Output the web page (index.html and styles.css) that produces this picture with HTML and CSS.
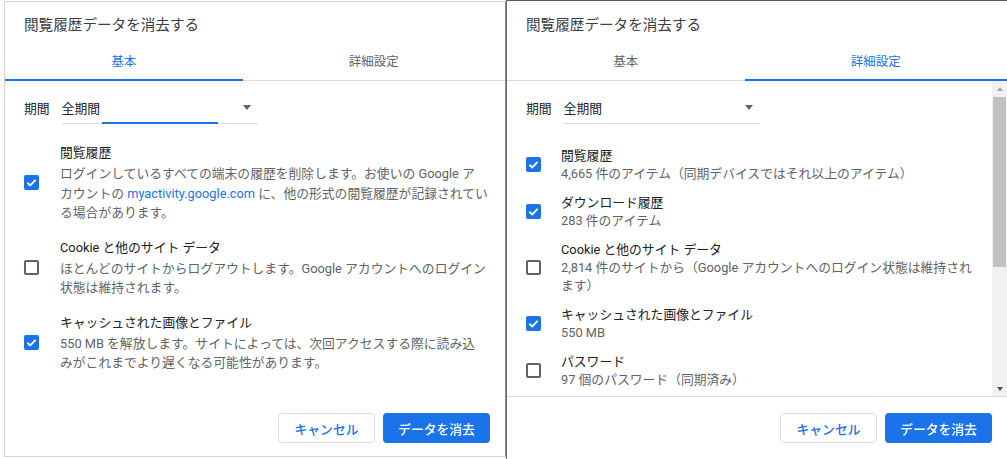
FILE: index.html
```html
<!DOCTYPE html>
<html lang="ja">
<head>
<meta charset="utf-8">
<title>閲覧履歴データを消去する</title>
<link rel="stylesheet" href="styles.css">
</head>
<body>
<div class="screen">
  <section class="dialog dialog-left">
    <h1 class="title">閲覧履歴データを消去する</h1>
    <div class="tabs">
      <div class="tab active">基本</div>
      <div class="tab">詳細設定</div>
    </div>
    <div class="body">
      <div class="content">
        <div class="period">
          <span class="period-label">期間</span>
          <div class="select focused"><span>全期間</span><span class="arrow"></span></div>
        </div>
        <div class="items items-basic">
          <div class="item">
            <span class="cb checked"><svg viewBox="0 0 16 16"><path d="M3.6 8.3 L6.6 11.1 L12.4 5.2"/></svg></span>
            <div class="text">
              <div class="label">閲覧履歴</div>
              <div class="desc">ログインしているすべての端末の履歴を削除します。お使いの Google ア<br>カウントの <span class="link">myactivity.google.com</span> に、他の形式の閲覧履歴が記録されてい<br>る場合があります。</div>
            </div>
          </div>
          <div class="item">
            <span class="cb"></span>
            <div class="text">
              <div class="label">Cookie と他のサイト データ</div>
              <div class="desc">ほとんどのサイトからログアウトします。Google アカウントへのログイン<br>状態は維持されます。</div>
            </div>
          </div>
          <div class="item">
            <span class="cb checked"><svg viewBox="0 0 16 16"><path d="M3.6 8.3 L6.6 11.1 L12.4 5.2"/></svg></span>
            <div class="text">
              <div class="label">キャッシュされた画像とファイル</div>
              <div class="desc">550 MB を解放します。サイトによっては、次回アクセスする際に読み込<br>みがこれまでより遅くなる可能性があります。</div>
            </div>
          </div>
        </div>
      </div>
    </div>
    <div class="footer">
      <button class="btn btn-cancel">キャンセル</button>
      <button class="btn btn-primary">データを消去</button>
    </div>
  </section>

  <section class="dialog dialog-right">
    <h1 class="title">閲覧履歴データを消去する</h1>
    <div class="tabs">
      <div class="tab">基本</div>
      <div class="tab active">詳細設定</div>
    </div>
    <div class="body body-scroll">
      <div class="content">
        <div class="period">
          <span class="period-label">期間</span>
          <div class="select"><span>全期間</span><span class="arrow"></span></div>
        </div>
        <div class="items items-adv">
          <div class="item">
            <span class="cb checked"><svg viewBox="0 0 16 16"><path d="M3.6 8.3 L6.6 11.1 L12.4 5.2"/></svg></span>
            <div class="text">
              <div class="label">閲覧履歴</div>
              <div class="desc">4,665 件のアイテム（同期デバイスではそれ以上のアイテム）</div>
            </div>
          </div>
          <div class="item">
            <span class="cb checked"><svg viewBox="0 0 16 16"><path d="M3.6 8.3 L6.6 11.1 L12.4 5.2"/></svg></span>
            <div class="text">
              <div class="label">ダウンロード履歴</div>
              <div class="desc">283 件のアイテム</div>
            </div>
          </div>
          <div class="item">
            <span class="cb"></span>
            <div class="text">
              <div class="label">Cookie と他のサイト データ</div>
              <div class="desc">2,814 件のサイトから（Google アカウントへのログイン状態は維持され<br>ます）</div>
            </div>
          </div>
          <div class="item">
            <span class="cb checked"><svg viewBox="0 0 16 16"><path d="M3.6 8.3 L6.6 11.1 L12.4 5.2"/></svg></span>
            <div class="text">
              <div class="label">キャッシュされた画像とファイル</div>
              <div class="desc">550 MB</div>
            </div>
          </div>
          <div class="item">
            <span class="cb"></span>
            <div class="text">
              <div class="label">パスワード</div>
              <div class="desc">97 個のパスワード（同期済み）</div>
            </div>
          </div>
        </div>
      </div>
      <div class="scrollbar">
        <div class="sb-btn sb-up"><span></span></div>
        <div class="sb-thumb"></div>
        <div class="sb-space"></div>
        <div class="sb-btn sb-down"><span></span></div>
      </div>
    </div>
    <div class="footer">
      <button class="btn btn-cancel">キャンセル</button>
      <button class="btn btn-primary">データを消去</button>
    </div>
  </section>
</div>
</body>
</html>
```

FILE: styles.css
```css
* { box-sizing: border-box; }
html, body { margin: 0; padding: 0; background: #fff; }
body {
  font-family: Roboto, "Noto Sans CJK JP", sans-serif;
  font-size: 12.8px;
  color: #202124;
}
.screen {
  display: flex;
  align-items: flex-start;
  width: 1007px;
  height: 459px;
  overflow: hidden;
}
.dialog {
  display: flex;
  flex-direction: column;
  background: #fff;
  flex: none;
}
.dialog-left {
  width: 502px;
  height: 456px;
  margin: 1px 0 0 4px;
  border: 1px solid #d4d4d4;
  border-right-color: #8a8a8a;
}
.dialog-right {
  width: 501px;
  height: 459px;
  border-top: 1px solid #5a5a5a;
  border-left: 1px solid #6a6a6a;
}
.title {
  margin: 0;
  padding: 13px 19px 0;
  font-size: 14.6px;
  font-weight: 400;
  line-height: 20px;
  color: #3c4043;
}
.dialog-right .title { padding-top: 14px; }
.tabs {
  display: flex;
  margin-top: 9px;
  height: 37px;
  box-shadow: inset 0 -1px #dadce0;
}
.tab {
  flex: 1 1 auto;
  text-align: center;
  line-height: 35px;
  border-bottom: 2px solid transparent;
  color: #5f6368;
  font-size: 12.5px;
}
.tab.active {
  color: #1a73e8;
  border-bottom-color: #1a73e8;
}
.body {
  flex: 1;
  min-height: 0;
  display: flex;
  overflow: hidden;
}
.body-scroll {
  border-bottom: 1px solid #dadce0;
}
.content {
  flex: 1;
  min-width: 0;
  padding: 12px 0 0 19px;
}
.period {
  display: flex;
  align-items: center;
  gap: 12px;
}
.period-label { line-height: 30px; }
.select {
  position: relative;
  display: flex;
  align-items: center;
  justify-content: space-between;
  width: 196px;
  height: 31px;
  padding: 0 7px 1px 0;
  border-bottom: 1px solid #dadce0;
}
.select.focused::after {
  content: "";
  position: absolute;
  left: 40px;
  bottom: -1px;
  width: 116px;
  height: 2px;
  background: #1a73e8;
}
.arrow {
  width: 0;
  height: 0;
  border-top: 5px solid #5f6368;
  border-left: 4.5px solid transparent;
  border-right: 4.5px solid transparent;
}
.items-basic { margin-top: 11px; }
.items-adv { margin-top: 16.75px; }
.item {
  display: flex;
  align-items: center;
}
.items-basic .item { gap: 21px; padding: 8px 0 7px; }
.items-adv .item { gap: 20px; padding: 4.75px 0; }
.text { white-space: nowrap; }
.items-basic .label { line-height: 20px; }
.items-basic .desc { margin-top: 1px; line-height: 19.5px; color: #5f6368; }
.items-adv .label { line-height: 19px; }
.items-adv .desc { line-height: 18.5px; color: #5f6368; }
.link { color: #1a73e8; }
.cb {
  flex: none;
  width: 15px;
  height: 15px;
  border: 2px solid #5f6368;
  border-radius: 2px;
  display: flex;
}
.cb.checked {
  border: none;
  background: #1a73e8;
}
.cb svg { width: 15px; height: 15px; }
.cb svg path {
  fill: none;
  stroke: #fff;
  stroke-width: 2;
}
.scrollbar {
  flex: none;
  width: 15px;
  display: flex;
  flex-direction: column;
  background: #f1f1f1;
}
.sb-btn {
  height: 15px;
  display: flex;
  align-items: center;
  justify-content: center;
  flex: none;
}
.sb-up span {
  width: 0; height: 0;
  border-bottom: 4px solid #a3a3a3;
  border-left: 3.5px solid transparent;
  border-right: 3.5px solid transparent;
}
.sb-down span {
  width: 0; height: 0;
  border-top: 4px solid #505050;
  border-left: 3.5px solid transparent;
  border-right: 3.5px solid transparent;
}
.sb-thumb {
  flex: none;
  height: 170px;
  margin: 1px 1px 0 1px;
  background: #c1c1c1;
}
.sb-space { flex: 1; }
.footer {
  flex: none;
  display: flex;
  justify-content: flex-end;
  gap: 8px;
  padding: 16px 15px 0 0;
  height: 59px;
}
.dialog-right .footer { height: 62px; }
.btn {
  height: 30px;
  border-radius: 4px;
  font-family: Roboto, "Noto Sans CJK JP", sans-serif;
  font-size: 12.8px;
  font-weight: 500;
  padding: 0;
  cursor: pointer;
}
.btn-cancel {
  width: 97px;
  background: #fff;
  color: #1a73e8;
  border: 1px solid #dadce0;
}
.btn-primary {
  width: 107px;
  background: #1a73e8;
  color: #fff;
  border: none;
}
```
